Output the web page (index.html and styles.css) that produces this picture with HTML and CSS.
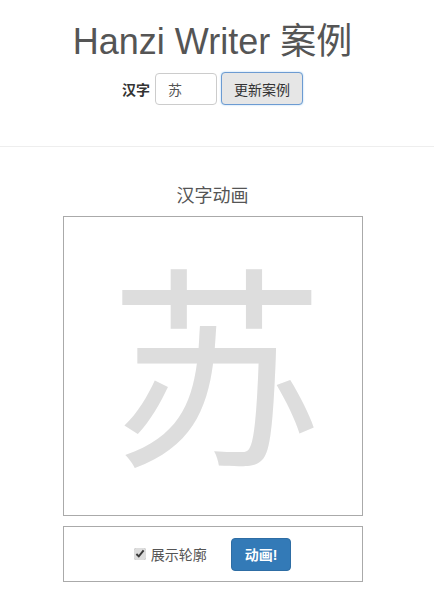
FILE: index.html
```html
<!DOCTYPE html>
<html lang="zh">
<head>
  <meta charset="UTF-8">
  <meta name="viewport" content="width=device-width, initial-scale=1.0">
  <title>Hanzi Writer 案例</title>
  <link rel="stylesheet" href="styles.css">
</head>
<body>
  <div class="header">
    <h1>Hanzi Writer 案例</h1>
    <form class="char-form">
      <label for="char">汉字</label>
      <input type="text" id="char" value="苏">
      <button type="button" class="btn-update">更新案例</button>
    </form>
  </div>

  <hr>

  <div class="demo">
    <h3>汉字动画</h3>
    <div class="target"><span class="glyph">苏</span></div>
    <div class="actions">
      <label class="outline"><input type="checkbox" checked> 展示轮廓</label>
      <button type="button" class="btn-animate">动画!</button>
    </div>
  </div>
</body>
</html>
```

FILE: styles.css
```css
body { margin: 0; padding-right: 9px; font-family: "Liberation Sans", Arial, "Noto Sans CJK SC", sans-serif; font-size: 14px; color: #333; background: #fff; }
.header { text-align: center; padding-top: 20px; }
h1 { font-size: 36px; font-weight: 400; color: #555; margin: 0 0 8px; line-height: 44px; }
.char-form { display: flex; justify-content: center; align-items: center; gap: 4px; }
.char-form label { font-weight: bold; margin-right: 1px; }
.char-form input { width: 62px; height: 32px; box-sizing: border-box; padding: 6px 12px; border: 1px solid #ccc; border-radius: 4px; font-size: 14px; font-family: inherit; color: #555; }
.btn-update { height: 33px; padding: 0 12px; background: #e6e6e6; border: 1px solid #6c9bd2; border-radius: 4px; font-size: 14px; font-family: inherit; color: #333; box-shadow: 0 0 2px rgba(102,175,233,.6); }
hr { border: 0; border-top: 1px solid #eee; margin: 41px -9px 0 0; }
.demo { width: 300px; margin: 0 auto; text-align: center; }
h3 { font-size: 18px; font-weight: 400; color: #555; margin: 39px 0 10px; line-height: 20px; }
.target { height: 298px; border: 1px solid #aaa; display: flex; justify-content: center; align-items: center; }
.glyph { font-family: "Noto Sans CJK SC", sans-serif; font-size: 215px; line-height: 230px; color: #ddd; font-weight: 400; padding-bottom: 18px; margin-left: 8px; }
.actions { margin-top: 10px; height: 54px; border: 1px solid #aaa; display: flex; justify-content: center; align-items: center; gap: 24px; }
.outline { color: #555; display: flex; align-items: center; gap: 5px; }
.outline input { margin: 0; width: 12px; height: 12px; accent-color: #ddd; }
.btn-animate { height: 33px; padding: 0 13px; background: #337ab7; border: 1px solid #2e6da4; border-radius: 4px; color: #fff; font-size: 14px; font-weight: bold; font-family: inherit; }
```
